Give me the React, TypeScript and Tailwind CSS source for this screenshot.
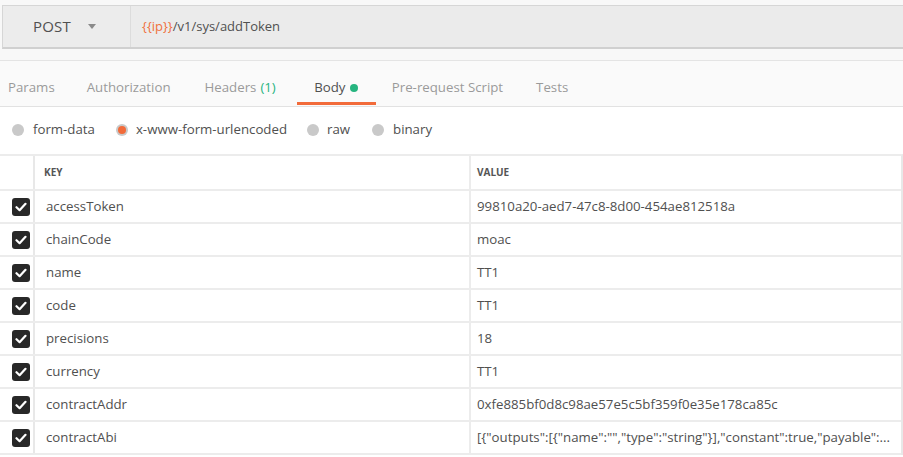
import React from 'react';

const rows: [string, string][] = [
  ['accessToken', '99810a20-aed7-47c8-8d00-454ae812518a'],
  ['chainCode', 'moac'],
  ['name', 'TT1'],
  ['code', 'TT1'],
  ['precisions', '18'],
  ['currency', 'TT1'],
  ['contractAddr', '0xfe885bf0d8c98ae57e5c5bf359f0e35e178ca85c'],
  ['contractAbi', '[{"outputs":[{"name":"","type":"string"}],"constant":true,"payable":...'],
];

const Check = () => (
  <div className="w-[18px] h-[18px] rounded-[3px] bg-[#282828] flex items-center justify-center">
    <svg width="12" height="10" viewBox="0 0 12 10">
      <path d="M1.5 5.2 L4.6 8.2 L10.5 1.8" fill="none" stroke="#fff" strokeWidth="2.2" strokeLinecap="round" strokeLinejoin="round" />
    </svg>
  </div>
);

const Radio = ({ on }: { on?: boolean }) => (
  <span className="w-3 h-3 rounded-full bg-[#c9c9c9] flex items-center justify-center">
    {on && <span className="w-[8px] h-[8px] rounded-full bg-[#f26b3a]" />}
  </span>
);

export default function App() {
  return (
    <div className="w-[903px] h-[457px] overflow-hidden bg-white text-[13.25px] text-[#505050]" style={{ fontFamily: '"Open Sans", sans-serif' }}>
      {/* request bar */}
      <div className="bg-[#f8f8f8] pt-[5px] pb-[11px] pl-[2px] border-b border-[#e4e4e4]">
        <div className="flex h-[44px] border-t border-l border-[#d6d6d6] border-b-2 border-b-[#d0d0d0] bg-[#ebebeb]">
          <div className="w-[128px] flex items-center border-r border-[#dcdcdc] bg-[#ececec]">
            <span className="ml-[30px] text-[15px] text-[#505050] font-medium tracking-[0.2px]">POST</span>
            <svg className="ml-[17px]" width="8" height="5" viewBox="0 0 8 5">
              <path d="M0 0 L8 0 L4 5 Z" fill="#8a8a8a" />
            </svg>
          </div>
          <div className="flex items-center pl-[11px] text-[13px]">
            <span className="text-[#f0703c]">{'{{ip}}'}</span>
            <span>/v1/sys/addToken</span>
          </div>
        </div>
      </div>

      {/* tabs */}
      <div className="flex h-[46px] bg-[#fafafa] border-b border-[#e2e2e2] pl-[8px]">
        <div className="flex items-center text-[#9a9a9a] pt-[9px]">Params</div>
        <div className="flex items-center text-[#9a9a9a] pt-[9px] ml-[32px]">Authorization</div>
        <div className="flex items-center text-[#9a9a9a] pt-[9px] ml-[34px]">
          Headers <span className="text-[#26b47f] ml-[4px]">(1)</span>
        </div>
        <div className="relative flex items-center pt-[9px] ml-[21px] w-[79px] justify-center text-[#505050]">
          Body <span className="ml-[5px] w-[8px] h-[8px] rounded-full bg-[#26b47f]" />
          <div className="absolute left-0 right-0 bottom-[1px] h-[3px] bg-[#f26b3a]" />
        </div>
        <div className="flex items-center text-[#9a9a9a] pt-[9px] ml-[16px]">Pre-request Script</div>
        <div className="flex items-center text-[#9a9a9a] pt-[9px] ml-[33px]">Tests</div>
      </div>

      {/* body type */}
      <div className="flex items-center h-[47px] pl-[12px] pb-[2px]">
        <Radio />
        <span className="ml-[9px]">form-data</span>
        <span className="ml-[21px]"><Radio on /></span>
        <span className="ml-[8px]">x-www-form-urlencoded</span>
        <span className="ml-[20px]"><Radio /></span>
        <span className="ml-[8px]">raw</span>
        <span className="ml-[22px]"><Radio /></span>
        <span className="ml-[9px]">binary</span>
      </div>

      {/* table */}
      <div className="border-t-2 border-[#ececec] border-r-2 border-r-[#e8e8e8]">
        <div className="flex h-[35px] border-b-2 border-[#ececec]">
          <div className="w-[35px] border-r-2 border-[#e8e8e8]" />
          <div className="w-[436px] flex items-center pl-[9px] text-[10px] font-bold text-[#555] border-r-2 border-[#ececec]">KEY</div>
          <div className="flex-1 flex items-center pl-[6px] text-[10px] font-bold text-[#555]">VALUE</div>
        </div>
        {rows.map(([k, v]) => (
          <div key={k} className="flex h-[33px] border-b-2 border-[#ececec]">
            <div className="w-[35px] flex items-center justify-end pr-[3px] border-r-2 border-[#e8e8e8]">
              <Check />
            </div>
            <div className="w-[436px] flex items-center pl-[11px] border-r-2 border-[#ececec]">{k}</div>
            <div className="flex-1 flex items-center pl-[6px] whitespace-nowrap overflow-hidden">{v}</div>
          </div>
        ))}
      </div>
    </div>
  );
}
